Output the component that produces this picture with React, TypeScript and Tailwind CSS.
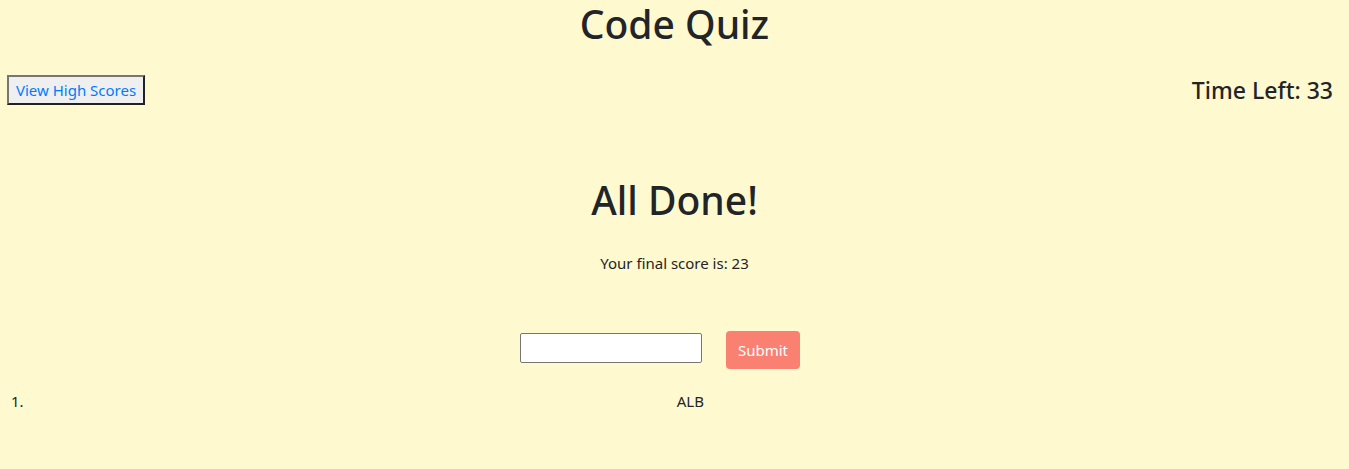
export default function App() {
  return (
    <div className="min-h-[469px] w-full bg-[#fff9cf] text-[#212529] font-['Noto_Sans',sans-serif]">
      <h1 className="text-center text-[39px] font-medium leading-[47px]">Code Quiz</h1>

      {/* top bar */}
      <div className="mt-[28px] flex items-center justify-between pl-[7px] pr-[16px]">
        <button className="h-[30px] border-2 border-t-[#767676] border-l-[#767676] border-b-[#222] border-r-[#222] bg-[#efefef] px-[7px] text-[15px] leading-none text-[#007bff]">
          View High Scores
        </button>
        <h4 className="text-[23px] font-medium leading-[30px]">Time Left: 33</h4>
      </div>

      {/* results */}
      <div className="mt-[71px] flex flex-col items-center">
        <h1 className="text-[39px] font-medium leading-[48px]">All Done!</h1>
        <p className="mt-[27px] text-[15px] leading-[24px]">Your final score is: 23</p>
        <div className="mt-[56px] flex items-start gap-[24px] pr-[29px]">
          <input type="text" className="mt-[2px] h-[30px] w-[182px] rounded-[2px] border border-[#767676] bg-white" />
          <button className="h-[38px] rounded-[4px] bg-[#fa8072] px-[12px] text-[15px] text-white">Submit</button>
        </div>
      </div>

      {/* scores list */}
      <ol className="mt-[20px] pb-[16px]">
        <li className="flex pl-[11px] text-[15px] leading-[24px]">
          <span>1.</span>
          <span className="flex-1 pl-[8px] text-center">ALB</span>
        </li>
      </ol>
    </div>
  )
}
